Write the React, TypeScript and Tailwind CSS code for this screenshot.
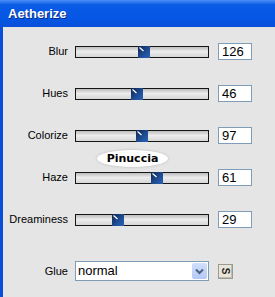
import React from 'react';

const sliders = [
  { label: 'Blur', value: 126, pos: 62 },
  { label: 'Hues', value: 46, pos: 55 },
  { label: 'Colorize', value: 97, pos: 60 },
  { label: 'Haze', value: 61, pos: 75 },
  { label: 'Dreaminess', value: 29, pos: 36 },
];

function Thumb({ pos }: { pos: number }) {
  return (
    <div className="absolute top-[-1px] h-[12px] w-[12px]" style={{ left: pos }}>
      <svg width="12" height="12" viewBox="0 0 12 12">
        <defs>
          <linearGradient id="thumb" x1="0" y1="0" x2="1" y2="1">
            <stop offset="0" stopColor="#0e2550" />
            <stop offset="0.6" stopColor="#1f4f98" />
            <stop offset="1" stopColor="#2c62b4" />
          </linearGradient>
        </defs>
        <rect x="0" y="0" width="12" height="12" fill="url(#thumb)" />
        <line x1="1.5" y1="1.5" x2="5.5" y2="5" stroke="#ffffff" strokeWidth="1.2" />
      </svg>
    </div>
  );
}

function SliderRow({ label, value, pos }: { label: string; value: number; pos: number }) {
  return (
    <div className="flex h-[17px] items-center">
      <div className="w-[65px] text-right text-[11px] text-black">{label}</div>
      <div className="relative ml-[7px] h-[12px] w-[134px] border border-[#161616] bg-[linear-gradient(#bdbdbd,#ececec_45%,#d6d6d6)]">
        <Thumb pos={pos} />
      </div>
      <div className="ml-[9px] h-[17px] w-[34px] border border-[#7f9db9] bg-white pl-[3px] text-[13px] leading-[15px] text-black">
        {value}
      </div>
    </div>
  );
}

export default function App() {
  return (
    <div className="flex h-[297px] w-[275px] flex-col overflow-hidden font-['Liberation_Sans',Arial,sans-serif]">
      {/* title bar */}
      <div className="h-[27px] shrink-0 bg-[linear-gradient(#4a8ff5,#0a5be6_18%,#0456e4_70%,#0a4fd8)] pl-[8px] pt-[6px] text-[13px] font-bold leading-[16px] text-white [text-shadow:1px_1px_0_#0b2a86]">
        Aetherize
      </div>

      <div className="flex flex-1">
        <div className="w-[3px] bg-[#0a4fd8]" />
        <div className="relative flex flex-1 flex-col gap-[25px] bg-[#e5e5e5] pt-[16px]">
          {sliders.map((s) => (
            <SliderRow key={s.label} {...s} />
          ))}

          <div className="mt-[8px] flex h-[20px] items-center">
            <div className="w-[65px] text-right text-[11px] text-black">Glue</div>
            <div className="ml-[7px] flex h-[20px] w-[134px] items-center border border-[#7f9db9] bg-white">
              <span className="flex-1 pl-[2px] text-[13px] text-black">normal</span>
              <div className="mr-[1px] flex h-[16px] w-[15px] items-center justify-center rounded-[2px] bg-[linear-gradient(#d2dffc,#b4c8f6)]">
                <svg width="9" height="7" viewBox="0 0 9 7">
                  <path d="M1 1.5 L4.5 5 L8 1.5" fill="none" stroke="#4d6185" strokeWidth="2" />
                </svg>
              </div>
            </div>
            <div className="ml-[9px] flex h-[15px] w-[15px] items-center justify-center border border-[#9a9a90] bg-[#e8e6da] shadow-[inset_-1px_-1px_0_#c0bdae]">
              <span className="rotate-90 text-[10px] font-bold leading-none text-[#222]">S</span>
            </div>
          </div>

          {/* watermark */}
          <div className="absolute left-[94px] top-[123px] flex h-[17px] w-[71px] items-center justify-center rounded-[50%] bg-white shadow-[0_0_2px_1px_#cfcfcf]">
            <span className="font-['DejaVu_Sans',sans-serif] text-[11px] font-bold leading-none text-black">Pinuccia</span>
          </div>
        </div>
      </div>
    </div>
  );
}
